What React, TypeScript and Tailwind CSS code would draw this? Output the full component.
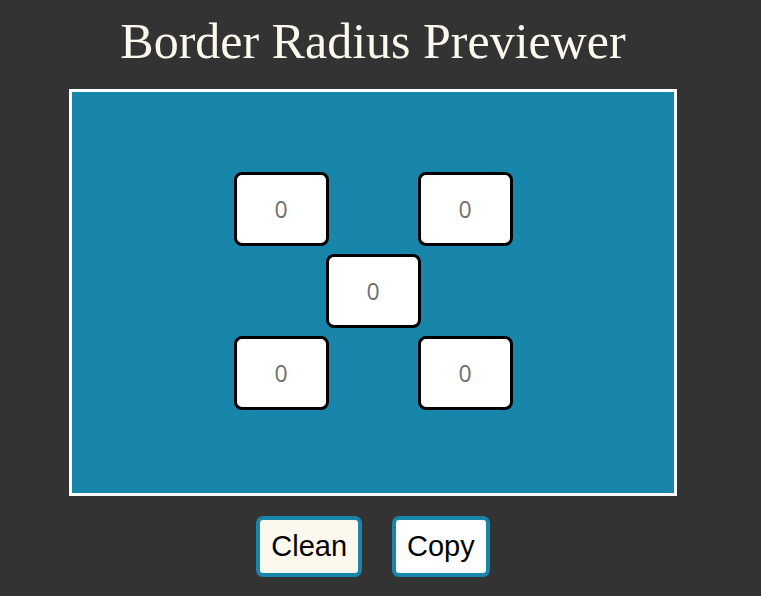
import { useState } from 'react';

const corners = ['top-left', 'top-right', 'bottom-left', 'bottom-right'] as const;

function RadiusInput({ label, value, onChange }: { label: string; value: string; onChange: (v: string) => void }) {
  return (
    <input
      aria-label={label}
      value={value}
      onChange={(e) => onChange(e.target.value)}
      placeholder="0"
      className="w-[95px] h-[74px] rounded-[8px] border-[3px] border-black bg-white text-center text-[23px] text-black placeholder:text-[#6f6f6f] outline-none"
      style={{ fontFamily: '"Open Sans", sans-serif' }}
    />
  );
}

export default function App() {
  const [values, setValues] = useState<Record<string, string>>({});
  const set = (k: string) => (v: string) => setValues((prev) => ({ ...prev, [k]: v }));

  const clean = () => setValues({});
  const copy = () => {
    const css = corners.map((c) => `${values[c] || 0}px`).join(' ');
    navigator.clipboard?.writeText(`border-radius: ${css};`).catch(() => {});
  };

  return (
    <div className="min-h-[596px] bg-[#333333] pr-[15px] flex flex-col items-center">
      <h1
        className="mt-[4px] text-[50px] leading-normal text-[#fdf8ee]"
        style={{ fontFamily: '"Liberation Serif", "Times New Roman", serif' }}
      >
        Border Radius Previewer
      </h1>

      <div className="mt-[10px] w-[608px] h-[407px] border-[3px] border-white bg-[#1886aa] flex flex-col items-center justify-center gap-[8px] pb-[3px]">
        <div className="flex gap-[89px]">
          <RadiusInput label="top-left" value={values['top-left'] || ''} onChange={set('top-left')} />
          <RadiusInput label="top-right" value={values['top-right'] || ''} onChange={set('top-right')} />
        </div>
        <div className="flex">
          <RadiusInput label="all" value={values['all'] || ''} onChange={set('all')} />
        </div>
        <div className="flex gap-[89px]">
          <RadiusInput label="bottom-left" value={values['bottom-left'] || ''} onChange={set('bottom-left')} />
          <RadiusInput label="bottom-right" value={values['bottom-right'] || ''} onChange={set('bottom-right')} />
        </div>
      </div>

      <div
        className="mt-[20px] flex gap-[30px] text-[29px] leading-normal text-black"
        style={{ fontFamily: '"Liberation Sans", Arial, sans-serif' }}
      >
        <button
          onClick={clean}
          className="px-[11px] py-[10px] h-[61px] flex items-center rounded-[7px] border-4 border-[#1886aa] bg-[#fdf8ee]"
        >
          Clean
        </button>
        <button
          onClick={copy}
          className="px-[11px] py-[10px] h-[61px] flex items-center rounded-[7px] border-4 border-[#1886aa] bg-white"
        >
          Copy
        </button>
      </div>
    </div>
  );
}
